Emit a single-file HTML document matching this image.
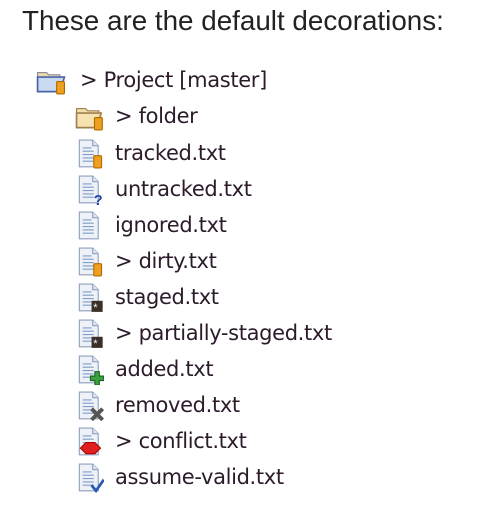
<!DOCTYPE html>
<html><head><style>
body{margin:0;width:489px;height:522px;background:#fff;position:relative;overflow:hidden;font-family:"Liberation Sans",sans-serif}
.h{position:absolute;left:22px;top:7px;font-size:27.8px;line-height:28px;color:#222}
.r{position:absolute;font-family:"DejaVu Sans","Liberation Sans",sans-serif;font-size:21px;color:#2b1b2b;letter-spacing:-0.35px;line-height:24px}
.i{position:absolute}
</style></head><body>
<div class="h">These are the default decorations:</div>

<svg width="0" height="0" style="position:absolute"><defs><g id="f"><path d="M1 1h12l5 5v19H1z" fill="#eef2f8" stroke="#8ea0bc"/><path d="M13 1v5h5" fill="#dfe6f0" stroke="#8ea0bc"/><path d="M4 8h8M4 11h10M4 14h10M4 17h10M4 20h10" stroke="#7f9cc8"/></g></defs></svg>

<svg class="i" style="left:35px;top:67px" width="32" height="28" viewBox="0 0 28 25"><path d="M2 5h8l2 2h10v4H2z" fill="#e9d9a8" stroke="#8a8a9a"/><path d="M2 22V9h24l-4 13z" fill="#c9daf0" stroke="#4a64a8" stroke-width="1.5"/><rect x="19" y="13" width="7" height="11" rx="1" fill="#f0a020" stroke="#b06a00"/></svg>
<div class="r" style="left:80px;top:68px">&gt; Project [master]</div>

<svg class="i" style="left:74px;top:103px" width="32" height="28" viewBox="0 0 28 25"><path d="M2 5h8l2 2h10v4H2z" fill="#f2dfa8" stroke="#a08050"/><path d="M2 22V9h22l-4 13z" fill="#f6e3b0" stroke="#a08050" stroke-width="1.5"/><rect x="18" y="13" width="7" height="11" rx="1" fill="#f0a020" stroke="#b06a00"/></svg>
<div class="r" style="left:115px;top:104px">&gt; folder</div>

<svg class="i" style="left:78px;top:139px" width="26" height="30" viewBox="0 0 23 27"><use href="#f"/><rect x="14" y="15" width="7" height="11" rx="1" fill="#f0a020" stroke="#b06a00"/></svg>
<div class="r" style="left:115px;top:141px">tracked.txt</div>

<svg class="i" style="left:78px;top:175px" width="26" height="30" viewBox="0 0 23 27"><use href="#f"/><text x="14" y="27" font-size="13" font-weight="bold" fill="#1a3ea8" font-family="Liberation Sans">?</text></svg>
<div class="r" style="left:115px;top:177px">untracked.txt</div>

<svg class="i" style="left:78px;top:211px" width="26" height="30" viewBox="0 0 23 27"><use href="#f"/></svg>
<div class="r" style="left:115px;top:213px">ignored.txt</div>

<svg class="i" style="left:78px;top:247px" width="26" height="30" viewBox="0 0 23 27"><use href="#f"/><rect x="14" y="15" width="7" height="11" rx="1" fill="#f0a020" stroke="#b06a00"/></svg>
<div class="r" style="left:115px;top:249px">&gt; dirty.txt</div>

<svg class="i" style="left:78px;top:283px" width="26" height="30" viewBox="0 0 23 27"><use href="#f"/><rect x="12" y="16" width="10" height="10" fill="#3a3028"/><text x="13.5" y="25" font-size="10" fill="#fff">*</text></svg>
<div class="r" style="left:115px;top:285px">staged.txt</div>

<svg class="i" style="left:78px;top:319px" width="26" height="30" viewBox="0 0 23 27"><use href="#f"/><rect x="12" y="16" width="10" height="10" fill="#3a3028"/><text x="13.5" y="25" font-size="10" fill="#fff">*</text></svg>
<div class="r" style="left:115px;top:321px">&gt; partially-staged.txt</div>

<svg class="i" style="left:78px;top:355px" width="26" height="30" viewBox="0 0 23 27"><use href="#f"/><path d="M15 15h4v4h4v4h-4v4h-4v-4h-4v-4h4z" fill="#3aa040" stroke="#1a6020"/></svg>
<div class="r" style="left:115px;top:357px">added.txt</div>

<svg class="i" style="left:78px;top:391px" width="26" height="30" viewBox="0 0 23 27"><use href="#f"/><path d="M12 16l10 10M22 16l-10 10" stroke="#555" stroke-width="3.5"/></svg>
<div class="r" style="left:115px;top:393px">removed.txt</div>

<svg class="i" style="left:78px;top:427px" width="26" height="30" viewBox="0 0 23 27"><use href="#f"/><path d="M2 19l5-5h8l5 5-5 5H7z" fill="#e02020" stroke="#a00"/></svg>
<div class="r" style="left:115px;top:429px">&gt; conflict.txt</div>

<svg class="i" style="left:78px;top:463px" width="26" height="30" viewBox="0 0 23 27"><use href="#f"/><path d="M12 20l4 5 7-10" fill="none" stroke="#2a5ab0" stroke-width="2.5"/></svg>
<div class="r" style="left:115px;top:465px">assume-valid.txt</div>
</body></html>
